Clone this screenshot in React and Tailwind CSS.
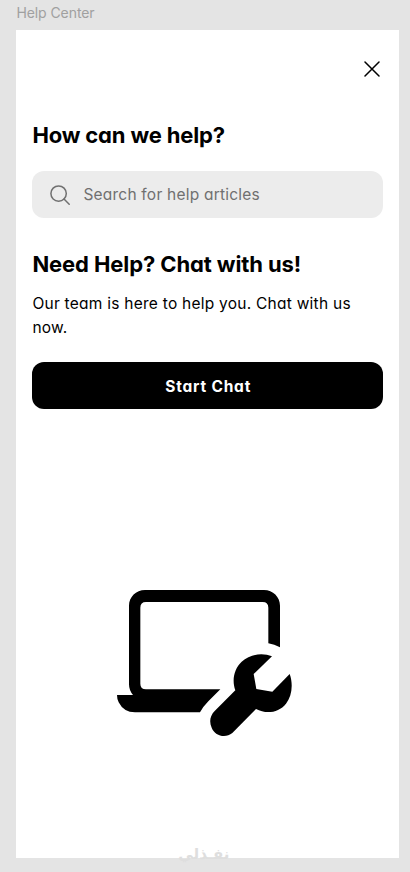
const heading = "whitespace-nowrap text-[22px] leading-7 font-bold";

function CloseIcon() {
  return (
    <svg className="size-4" viewBox="0 0 16 16" fill="none" stroke="currentColor" strokeWidth="1.5" strokeLinecap="round">
      <path d="M1 1 15 15M15 1 1 15" />
    </svg>
  );
}

function SearchIcon() {
  return (
    <svg className="size-5" viewBox="0 0 20 20" fill="none" stroke="currentColor" strokeWidth="1.5" strokeLinecap="round">
      <circle cx="8.6" cy="8.6" r="7.7" />
      <path d="m14 14 5.2 5.2" />
    </svg>
  );
}

function LaptopWrench() {
  return (
    <svg className="h-[150px] w-[180px]" viewBox="45 39 540 450" fill="black">
      <path
        fillRule="evenodd"
        d="M135 45H492C519 45 540 66 540 92V217Q523 208 505 205V98Q505 81 488 81H138Q121 81 121 98V326Q121 343 138 343H361L325 379Q310 394 300 412H105Q71 412 56 382Q51 372 51 360H99Q87 346 87 328V92C87 66 108 45 135 45Z"
      />
      <path d="M516 244C488 232 450 237 425 260C402 282 395 315 406 346L344 408C330 422 327 441 335 458C345 483 376 491 397 474L468 402C500 419 537 412 558 386C576 363 580 327 569 297L517 350L469 342L461 297Z" />
    </svg>
  );
}

export default function App() {
  return (
    <div className="h-[872px] w-[410px] overflow-hidden bg-[#e4e4e4] pl-[16.4px] font-['Inter','Noto_Sans',sans-serif] text-black">
      <div className="h-[30px] pt-[3px] text-[14px] leading-5 tracking-[-0.08px] text-[#a0a0a0]">Help Center</div>
      <main className="relative h-[828px] w-[382.6px] bg-white px-4 [font-feature-settings:'cv11']">
        <div className="flex h-[91px] items-start justify-end pt-[31px] pr-[3px]">
          <button aria-label="Close"><CloseIcon /></button>
        </div>
        <h1 className={`${heading} tracking-[-0.15px]`}>How can we help?</h1>
        <div className="mt-[21.5px] flex h-[47px] items-center gap-[13px] rounded-xl bg-[#ececec] pt-px pl-[18px] text-[#707070]">
          <SearchIcon />
          <span className="pt-px whitespace-nowrap text-[15.5px] tracking-[0.22px]">Search for help articles</span>
        </div>
        <h2 className={`${heading} mt-[32.5px] tracking-[-0.1px]`}>Need Help? Chat with us!</h2>
        <p className="mt-[14px] text-[15.5px] leading-6 tracking-[0.25px] whitespace-nowrap">
          Our team is here to help you. Chat with us<br />now.
        </p>
        <button className="mt-[22px] flex h-[47px] w-full items-center justify-center rounded-xl bg-black pt-[2px] pl-px text-[15.5px] font-bold tracking-[0.8px] text-white">
          Start Chat
        </button>
        <div className="mt-[179px] pl-[82.6px]"><LaptopWrench /></div>
        <div dir="rtl" className="absolute bottom-[-8px] left-[163px] w-[50px] text-center text-[15px] leading-6 whitespace-nowrap font-['DejaVu_Sans',sans-serif] font-bold text-[#dedede]">نفـذلي</div>
      </main>
    </div>
  );
}
